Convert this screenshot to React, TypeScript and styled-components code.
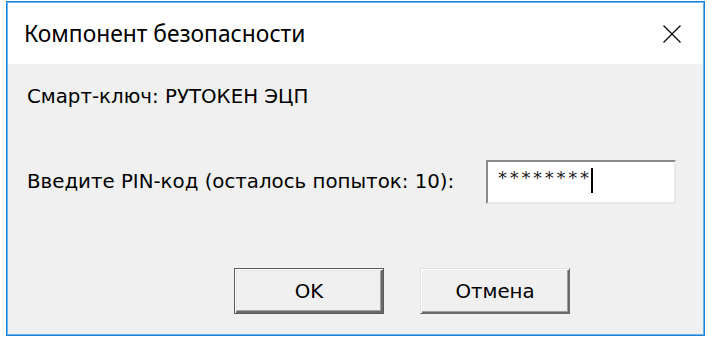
import React from "react";
import styled, { createGlobalStyle } from "styled-components";

const Global = createGlobalStyle`
  html, body { margin: 0; padding: 0; background: #ffffff; }
  body { font-family: "DejaVu Sans", Tahoma, sans-serif; }
  * { box-sizing: border-box; }
`;

const Page = styled.div`
  width: 715px;
  height: 346px;
  padding: 1px 0 0 6px;
  background: #ffffff;
`;

const Window = styled.div`
  width: 699px;
  height: 335px;
  border: 1px solid #1883d7;
  box-shadow: inset 0 0 0 1px #6fb2e8;
  display: flex;
  flex-direction: column;
  background: #f0f0f0;
  padding: 1px;
`;

const TitleBar = styled.div`
  height: 61px;
  background: #ffffff;
  display: flex;
  align-items: center;
  justify-content: space-between;
  padding: 0 22px 0 16px;
`;

const Title = styled.span`
  font-family: "Noto Sans", "Open Sans", sans-serif;
  font-size: 22.8px;
  color: #000;
  line-height: 28px;
`;

const CloseButton = styled.button`
  width: 19px;
  height: 19px;
  padding: 0;
  border: none;
  background: transparent;
  display: flex;
  align-items: center;
  justify-content: center;
  margin-top: 1px;
`;

const Body = styled.div`
  flex: 1;
  display: flex;
  flex-direction: column;
  padding: 21px 0 0 19px;
  font-family: "DejaVu Sans", Tahoma, sans-serif;
  font-size: 19.8px;
  color: #000;
`;

const Line = styled.div`
  height: 24px;
  line-height: 24px;
`;

const PinRow = styled.div`
  display: flex;
  align-items: center;
  margin-top: 51px;
`;

const Label = styled.span`
  width: 459px;
  line-height: 24px;
  white-space: nowrap;
`;

const PinBox = styled.div`
  width: 190px;
  height: 44px;
  background: #ffffff;
  border-style: solid;
  border-width: 2px;
  border-color: #8a8a8a #e8e8e8 #e8e8e8 #8a8a8a;
  padding: 5px 0 0 10px;
  display: flex;
  align-items: flex-start;
`;

const Stars = styled.span`
  font-size: 18px;
  letter-spacing: 2.7px;
  line-height: 22px;
  color: #202020;
`;

const Caret = styled.span`
  display: inline-block;
  width: 2px;
  height: 25px;
  background: #000;
  margin-left: -1px;
  margin-top: 1px;
`;

const ButtonRow = styled.div`
  display: flex;
  gap: 36px;
  margin: 64px 0 0 207px;
`;

const Button = styled.button<{ $default?: boolean }>`
  width: 150px;
  height: 46px;
  background: #f0f0f0;
  font-family: "DejaVu Sans", Tahoma, sans-serif;
  font-size: 19.8px;
  color: #000;
  padding: 0;
  border: 1px solid ${(p) => (p.$default ? "#5a5a5a" : "#dcdcdc")};
  box-shadow: ${(p) =>
    p.$default
      ? "inset 1px 1px 0 #ffffff, inset -2px -2px 0 #6a6a6a, inset 2px 2px 0 #e6e6e6, inset -3px -3px 0 #a0a0a0"
      : "inset 1px 1px 0 #ffffff, inset -1px -1px 0 #6a6a6a, inset -2px -2px 0 #a0a0a0"};
  ${(p) => (p.$default ? "" : "border-color: #e3e3e3 #6a6a6a #6a6a6a #e3e3e3;")}
`;

export default function App() {
  return (
    <>
      <Global />
      <Page>
        <Window>
          <TitleBar>
            <Title>Компонент безопасности</Title>
            <CloseButton aria-label="Закрыть">
              <svg width="18" height="18" viewBox="0 0 18 18">
                <path d="M0.5 0.5 L17.5 17.5 M17.5 0.5 L0.5 17.5" stroke="#111" strokeWidth="1.4" fill="none" />
              </svg>
            </CloseButton>
          </TitleBar>
          <Body>
            <Line>Смарт-ключ: РУТОКЕН ЭЦП</Line>
            <PinRow>
              <Label>Введите PIN-код (осталось попыток: 10):</Label>
              <PinBox>
                <Stars>********</Stars>
                <Caret />
              </PinBox>
            </PinRow>
            <ButtonRow>
              <Button $default>OK</Button>
              <Button>Отмена</Button>
            </ButtonRow>
          </Body>
        </Window>
      </Page>
    </>
  );
}
